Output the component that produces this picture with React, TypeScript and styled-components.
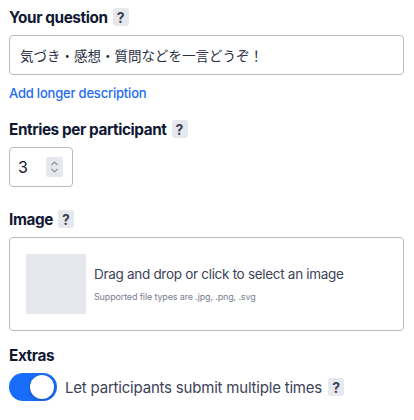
import React, { useState } from "react";
import styled, { createGlobalStyle } from "styled-components";

//== Styling ==//
const GlobalStyle = createGlobalStyle`
  body {
    margin: 0;
    background: #ffffff;
    font-family: "Inter", "Noto Sans CJK JP", sans-serif;
    color: #101834;
  }
`;

const Page = styled.div`
  padding: 8px 10px 0 9px;
  display: flex;
  flex-direction: column;
`;

const LabelRow = styled.div<{ $top?: number }>`
  display: flex;
  align-items: center;
  gap: 5px;
  height: 18px;
  margin-top: ${(p) => p.$top ?? 0}px;
  margin-bottom: 9px;
`;

const Label = styled.span`
  font-size: 15.3px;
  font-weight: 700;
  letter-spacing: -0.4px;
  color: #101834;
`;

const Help = styled.span`
  display: inline-flex;
  align-items: center;
  justify-content: center;
  width: 16px;
  height: 18px;
  border-radius: 3px;
  background: #e7e8ee;
  color: #3a3f55;
  font-size: 14px;
  font-weight: 700;
`;

const TextInput = styled.div`
  box-sizing: border-box;
  height: 40px;
  border: 1px solid #b9bac6;
  border-radius: 4px;
  padding: 0 10px;
  display: flex;
  align-items: center;
  font-family: "Noto Sans CJK JP", sans-serif;
  font-size: 13.5px;
  color: #2a2f45;
`;

const LinkText = styled.a`
  margin-top: 9px;
  font-size: 13px;
  font-weight: 500;
  line-height: 18px;
  color: #1d6cf2;
  text-decoration: none;
  letter-spacing: -0.2px;
`;

const NumberBox = styled.div`
  box-sizing: border-box;
  width: 64px;
  height: 40px;
  border: 1px solid #b9bac6;
  border-radius: 4px;
  display: flex;
  align-items: center;
  justify-content: space-between;
  padding: 0 9px 0 8px;
  font-size: 16px;
  color: #101834;
`;

const Spinner = styled.span`
  width: 17px;
  height: 20px;
  background: #e7e8ee;
  border-radius: 2px;
  display: flex;
  align-items: center;
  justify-content: center;
`;

const DropZone = styled.div`
  box-sizing: border-box;
  height: 94px;
  border: 1px solid #b9bac6;
  border-radius: 4px;
  display: flex;
  align-items: center;
  gap: 8px;
  padding: 0 16px;
`;

const Thumb = styled.div`
  width: 60px;
  height: 60px;
  background: #e6e7ec;
  flex-shrink: 0;
`;

const DropText = styled.div`
  display: flex;
  flex-direction: column;
  gap: 9px;
`;

const DropTitle = styled.span`
  font-size: 13.5px;
  color: #3d4258;
  letter-spacing: -0.3px;
`;

const DropHint = styled.span`
  font-size: 9px;
  color: #7a7e90;
  letter-spacing: -0.15px;
`;

const ToggleRow = styled.div`
  display: flex;
  align-items: center;
  gap: 8px;
`;

const Switch = styled.span<{ $on: boolean }>`
  position: relative;
  width: 48px;
  height: 28px;
  border-radius: 14px;
  background: ${(p) => (p.$on ? "#196cf7" : "#c7c9d3")};
  cursor: pointer;
  flex-shrink: 0;
`;

const Knob = styled.span<{ $on: boolean }>`
  position: absolute;
  top: 2px;
  left: ${(p) => (p.$on ? 21 : 2)}px;
  width: 24px;
  height: 24px;
  border-radius: 50%;
  background: #ffffff;
  box-shadow: 0 1px 3px rgba(16, 24, 52, 0.35);
`;

const ToggleLabel = styled.span`
  font-size: 15px;
  color: #3d4258;
  letter-spacing: -0.2px;
  margin-right: -2px;
`;

//== Component ==//
const App: React.FC = () => {
  const [multi, setMulti] = useState(true);

  return (
    <>
      <GlobalStyle />
      <Page>
        <LabelRow>
          <Label>Your question</Label>
          <Help>?</Help>
        </LabelRow>
        <TextInput>気づき・感想・質問などを一言どうぞ！</TextInput>
        <LinkText href="#">Add longer description</LinkText>

        <LabelRow $top={18}>
          <Label>Entries per participant</Label>
          <Help>?</Help>
        </LabelRow>
        <NumberBox>
          3
          <Spinner>
            <svg width="9" height="14" viewBox="0 0 9 14" fill="none" stroke="#8b8fa3" strokeWidth="1.1">
              <path d="M1.5 5 4.5 2 7.5 5" />
              <path d="M1.5 9 4.5 12 7.5 9" />
            </svg>
          </Spinner>
        </NumberBox>

        <LabelRow $top={23}>
          <Label>Image</Label>
          <Help>?</Help>
        </LabelRow>
        <DropZone>
          <Thumb />
          <DropText>
            <DropTitle>Drag and drop or click to select an image</DropTitle>
            <DropHint>Supported file types are .jpg, .png, .svg</DropHint>
          </DropText>
        </DropZone>

        <LabelRow $top={15}>
          <Label>Extras</Label>
        </LabelRow>
        <ToggleRow>
          <Switch $on={multi} onClick={() => setMulti(!multi)}>
            <Knob $on={multi} />
          </Switch>
          <ToggleLabel>Let participants submit multiple times</ToggleLabel>
          <Help>?</Help>
        </ToggleRow>
      </Page>
    </>
  );
};

export default App;
